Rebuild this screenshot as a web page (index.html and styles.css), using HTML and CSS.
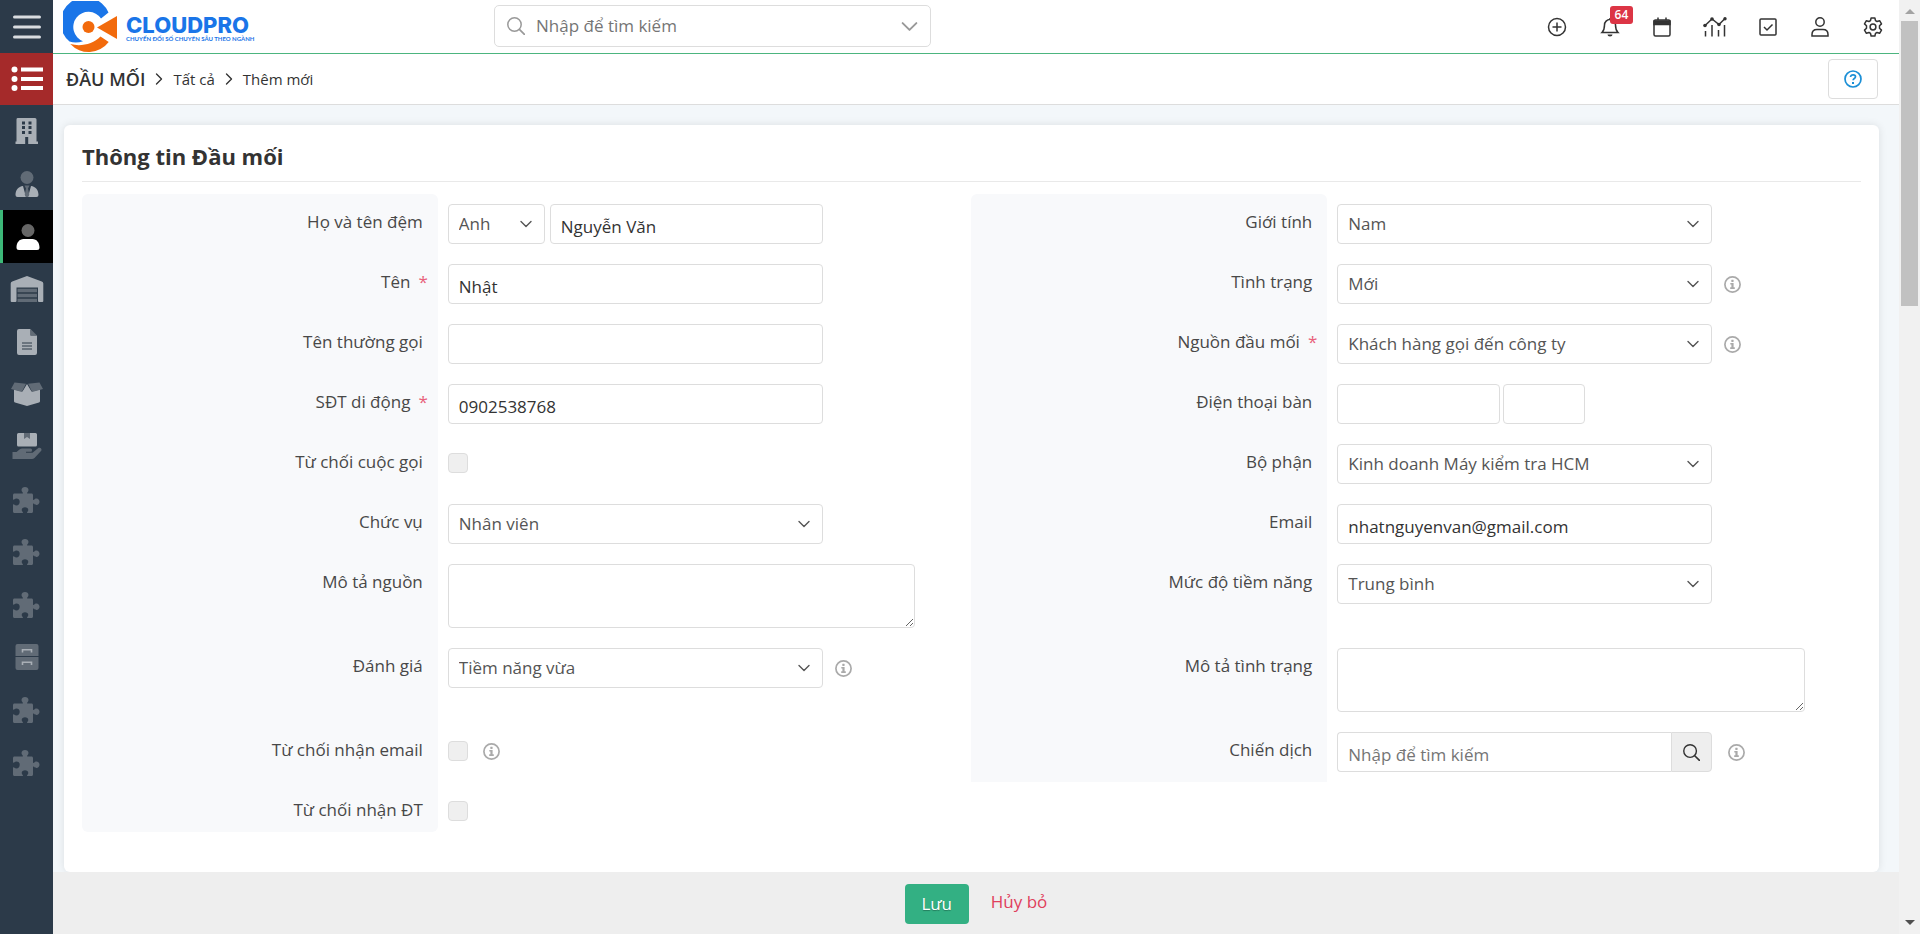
FILE: index.html
```html
<!DOCTYPE html>
<html lang="vi">
<head>
<meta charset="utf-8">
<title>Đầu mối - Thêm mới</title>
<link rel="stylesheet" href="styles.css">
</head>
<body>
<svg class="sprite" aria-hidden="true">
  <symbol id="chevron-down" viewBox="0 0 12 8"><path d="M1 1.500l5 5 5-5" fill="none" stroke="currentColor" stroke-width="1.400" stroke-linecap="round" stroke-linejoin="round"/></symbol>
  <symbol id="chevron-right" viewBox="0 0 8 12"><path d="M1.500 1l5 5-5 5" fill="none" stroke="currentColor" stroke-width="1.400" stroke-linecap="round" stroke-linejoin="round"/></symbol>
  <symbol id="search" viewBox="0 0 18 18"><circle cx="7.500" cy="7.500" r="6.700" fill="none" stroke="currentColor" stroke-width="1.500"/><path d="M12.400 12.400l5 5" stroke="currentColor" stroke-width="1.700" stroke-linecap="round"/></symbol>
  <symbol id="info" viewBox="0 0 17 17"><circle cx="8.500" cy="8.500" r="7.600" fill="none" stroke="currentColor" stroke-width="1.700"/><rect x="7.300" y="3.700" width="2.300" height="2.300" rx=".4" fill="currentColor"/><path d="M6.300 7h3.300v4.300h1.200v1.600H6.200v-1.600h1.200V8.500H6.300z" fill="currentColor"/></symbol>
  <symbol id="puzzle" viewBox="0 0 27 26"><path fill="currentColor" d="M1.500 6.500h7.800c.6 0 .8-.6.4-1.100C8.900 4.700 8.500 4 8.500 3 8.500 1.300 10 0 12 0s3.500 1.300 3.500 3c0 1-.4 1.700-1.200 2.400-.4.500-.2 1.100.4 1.100h3.800c.9 0 1.500.6 1.500 1.500v4.300c0 .6.6.8 1.100.4.6-.8 1.300-1.200 2.400-1.200 1.700 0 3 1.400 3 3.200s-1.300 3.200-3 3.200c-1.100 0-1.800-.4-2.400-1.200-.5-.4-1.100-.2-1.100.4v7.400c0 .9-.6 1.500-1.500 1.500h-3.800c-.7 0-.9-.6-.4-1.100.6-.6 1-1.200 1-2 0-1.500-1.500-2.600-3.300-2.600s-3.300 1.100-3.300 2.600c0 .8.400 1.400 1 2 .5.500.3 1.100-.4 1.100H1.500C.6 26 0 25.400 0 24.500v-6.600c0-.7.600-.8 1.100-.4.800.7 1.500 1 2.400 1 1.700 0 3.200-1.400 3.200-3.800s-1.500-3.300-3.200-3.300c-.9 0-1.600.4-2.400 1-.5.400-1.100.3-1.100-.4V8c0-.9.600-1.500 1.500-1.500z"/></symbol>
</svg>

<nav class="sidebar" aria-label="Menu chính">
  <button class="side-item side-toggle" aria-label="Mở menu"><svg width="28" height="24" viewBox="0 0 28 24"><path d="M1.500 2h25M1.500 12h25M1.500 22h25" stroke="#d9dce0" stroke-width="3" stroke-linecap="round"/></svg></button>
  <a class="side-item side-list" href="#" aria-label="Danh sách"><svg width="32" height="26" viewBox="0 0 32 26" fill="#fff"><circle cx="3.500" cy="3.500" r="3"/><circle cx="3.500" cy="13" r="3"/><circle cx="3.500" cy="22" r="3"/><rect x="10" y="1.500" width="22" height="4"/><rect x="10" y="11" width="22" height="4"/><rect x="10" y="20" width="22" height="4"/></svg></a>
  <div class="side-menu">
    <a class="side-item" href="#" aria-label="Công ty"><svg width="24" height="26" viewBox="0 0 24 26"><path fill="#a9afb6" d="M2.500 0h17.500a1.500 1.500 0 0 1 1.500 1.500V23.500H23v2.500H.5v-2.500h1V1.500A1.500 1.500 0 0 1 2.500 0z"/><path fill="#2c3a49" d="M7 3.500h3v3H7zm6.500 0h3v3h-3zM7 8h3v3H7zm6.500 0h3v3h-3zM7 13h3v3H7zm6.500 0h3v3h-3zM10.200 19h3v7h-3z"/></svg></a>
    <a class="side-item" href="#" aria-label="Liên hệ"><svg width="24" height="26" viewBox="0 0 24 26"><circle cx="12" cy="6.500" r="6.500" fill="#616b76"/><path fill="#a9afb6" d="M8 15l3 11H2.500A2 2 0 0 1 .5 24c0-5 3-8.500 7.500-9zM16 15l-3 11h8.500a2 2 0 0 0 2-2c0-5-3-8.500-7.500-9z"/><path fill="#616b76" d="M9.500 14.500h5L13 17.500l1.300 6-1.300 2.500h-2l-1.300-2.500 1.300-6z"/></svg></a>
    <a class="side-item side-active" href="#" aria-label="Đầu mối"><svg width="24" height="26" viewBox="0 0 24 26"><circle cx="12" cy="6.500" r="6.500" fill="#666"/><path fill="#fff" d="M7.500 15h9c4 0 7 3.500 7 8.500a2.500 2.500 0 0 1-2.500 2.500H3A2.500 2.500 0 0 1 .5 23.500c0-5 3-8.500 7-8.500z"/></svg></a>
    <a class="side-item" href="#" aria-label="Kho"><svg width="34" height="26" viewBox="0 0 34 26"><path fill="#a9afb6" d="M17 0l14.800 5.600A2 2 0 0 1 33.300 7.500V25a1 1 0 0 1-1 1H29a1 1 0 0 1-1-1V11.500H6.500V25a1 1 0 0 1-1 1H1.700a1 1 0 0 1-1-1V7.500a2 2 0 0 1 1.500-1.900z"/><path fill="#616b76" d="M7.500 12.700h19.500v3.500H7.500zm0 5h19.500v3.500H7.500zm0 5h19.500v3.300H7.500z"/></svg></a>
    <a class="side-item" href="#" aria-label="Báo giá"><svg width="20" height="26" viewBox="0 0 20 26"><path fill="#a9afb6" d="M2 0h11.500v6.500H20V24a2 2 0 0 1-2 2H2a2 2 0 0 1-2-2V2a2 2 0 0 1 2-2z"/><path fill="#616b76" d="M13.500 0L20 6.500h-6.500z"/><path stroke="#2c3a49" stroke-width="1" d="M5 14h10M5 17h10M5 20h10"/></svg></a>
    <a class="side-item" href="#" aria-label="Sản phẩm"><svg width="34" height="24" viewBox="0 0 34 24"><path fill="#a9afb6" d="M17 2l4.500 7.500L30 7.500V19a1.500 1.500 0 0 1-1 1.500L17 24 5 20.500A1.500 1.500 0 0 1 4 19V7.500l8.500 2z"/><path fill="#616b76" d="M4.500.5L16 1.800 11.800 10 1 7zM29.500.5L18 1.800 22.200 10 33 7z"/></svg></a>
    <a class="side-item" href="#" aria-label="Dịch vụ"><svg width="30" height="27" viewBox="0 0 30 27"><path fill="#a9afb6" d="M6.500 0h17a1.500 1.500 0 0 1 1.500 1.500V12a1.500 1.500 0 0 1-1.500 1.500h-17A1.500 1.500 0 0 1 5 12V1.500A1.500 1.500 0 0 1 6.500 0z"/><path fill="#616b76" d="M12 0h6v6l-3-2-3 2zM.5 19h4l3-2.500c1-.7 2-1 3.500-1h7.500c2 0 2 3.300 0 3.300H14v1h6.500l5.500-4.500c2.500-1.500 4.500 1 3 2.800l-6.500 7c-.8.700-1.500 1-2.500 1H.5z"/></svg></a>
    <a class="side-item" href="#" aria-label="Mô-đun 1"><svg class="puzzle"><use href="#puzzle"/></svg></a>
    <a class="side-item" href="#" aria-label="Mô-đun 2"><svg class="puzzle"><use href="#puzzle"/></svg></a>
    <a class="side-item" href="#" aria-label="Mô-đun 3"><svg class="puzzle"><use href="#puzzle"/></svg></a>
    <a class="side-item" href="#" aria-label="Lưu trữ"><svg width="24" height="26" viewBox="0 0 24 26"><path fill="#616b76" d="M2.500 0h19a2 2 0 0 1 2 2v10H.5V2a2 2 0 0 1 2-2zM.5 13h23v11a2 2 0 0 1-2 2h-19a2 2 0 0 1-2-2z"/><path fill="none" stroke="#a9afb6" stroke-width="1.600" d="M7.500 8.500V5.700h9v2.800M7.500 21v-2.800h9V21"/></svg></a>
    <a class="side-item" href="#" aria-label="Mô-đun 4"><svg class="puzzle"><use href="#puzzle"/></svg></a>
    <a class="side-item" href="#" aria-label="Mô-đun 5"><svg class="puzzle"><use href="#puzzle"/></svg></a>
  </div>
</nav>

<div class="page">
  <header class="topbar">
    <a class="logo" href="#">
      <svg width="56" height="52" viewBox="0 0 56 52" aria-hidden="true"><path fill="#1a75e8" d="M45.500 11.500A25 25 0 1 0 6.500 40.500Q13 42.500 20 40.200A15.200 15.200 0 1 1 38 17.400z"/><path fill="#f26a0c" d="M7.300 43A25 25 0 0 0 45.700 41L37.500 35.500C30 43 18 46 7.300 43z"/><circle cx="25.500" cy="26" r="6" fill="#f26a0c"/><path fill="#f26a0c" d="M34 26.500L54 15v23z"/></svg>
      <span class="logo-text"><strong>CLOUDPRO</strong><small>CHUYỂN ĐỔI SỐ CHUYÊN SÂU THEO NGÀNH</small></span>
    </a>
    <label class="global-search">
      <svg width="18" height="18"><use href="#search"/></svg>
      <input type="text" placeholder="Nhập để tìm kiếm" aria-label="Tìm kiếm">
      <svg width="17" height="11"><use href="#chevron-down"/></svg>
    </label>
    <div class="tools">
      <button class="tool" aria-label="Thêm"><svg width="20" height="20" viewBox="0 0 20 20"><circle cx="10" cy="10" r="8.500"/><path d="M10 5.500v9M5.500 10h9"/></svg></button>
      <button class="tool" aria-label="Thông báo"><svg width="20" height="20" viewBox="0 0 20 20"><path d="M10 1v1.500M2 15.500c2-2 2.500-4 2.500-7.500a5.500 5.500 0 0 1 11 0c0 3.500.5 5.500 2.500 7.500z"/><path fill="#333" stroke="none" d="M7.500 17.500h5a2.500 2 0 0 1-5 0z"/></svg><span class="badge">64</span></button>
      <button class="tool" aria-label="Lịch"><svg width="20" height="20" viewBox="0 0 20 20"><rect x="2" y="3" width="16" height="16" rx="1.500"/><path fill="#333" d="M2 4h16v3.500H2zM6 .5V3M14 .5V3"/></svg></button>
      <button class="tool" aria-label="Báo cáo"><svg width="24" height="20" viewBox="0 0 24 20"><path d="M1.500 9L9 2l7 5.500L22.500 1M2.500 14v5.500M9 8v11.500M15.500 13v6.500M21.500 8v11.500"/><g fill="#333" stroke="none"><circle cx="2" cy="8.500" r="1.800"/><circle cx="9" cy="2" r="1.800"/><circle cx="16" cy="7.500" r="1.800"/><circle cx="22" cy="1.800" r="1.700"/></g></svg></button>
      <button class="tool" aria-label="Công việc"><svg width="20" height="20" viewBox="0 0 20 20"><rect x="2" y="2" width="16" height="16" rx="1"/><path d="M6 10l3 3 5.500-5.500"/></svg></button>
      <button class="tool" aria-label="Tài khoản"><svg width="20" height="20" viewBox="0 0 20 20"><circle cx="10" cy="5" r="4.200"/><path d="M2 19v-1.500c0-3 2-5 5-5h6c3 0 5 2 5 5V19z"/></svg></button>
      <button class="tool" aria-label="Cài đặt"><svg width="20" height="20" viewBox="0 0 20 20"><circle cx="10" cy="10" r="2.900"/><path stroke-linejoin="round" d="M8.100 1h3.800l.6 2.600 1.500.9 2.600-.8 1.900 3.200-2 1.900v2.400l2 1.900-1.900 3.200-2.600-.8-1.500.9-.6 2.600H8.100l-.6-2.600-1.500-.9-2.600.8-1.900-3.200 2-1.900V8.800l-2-1.900 1.900-3.200 2.600.8 1.500-.9z"/></svg></button>
    </div>
  </header>

  <div class="crumbbar">
    <nav class="crumbs" aria-label="Đường dẫn">
      <a class="crumb-main" href="#">ĐẦU MỐI</a>
      <svg width="8" height="12"><use href="#chevron-right"/></svg>
      <a href="#">Tất cả</a>
      <svg width="8" height="12"><use href="#chevron-right"/></svg>
      <span>Thêm mới</span>
    </nav>
    <button class="help" aria-label="Trợ giúp"><svg width="18" height="18" viewBox="0 0 18 18" fill="none" stroke="#1b8fd6" stroke-width="1.700"><circle cx="9" cy="9" r="8"/><path d="M6.500 7c.2-1.500 1.200-2.200 2.600-2.200 1.300 0 2.400.8 2.400 2 0 1.700-2.400 1.700-2.400 3.400"/><path stroke-width="2" d="M9 12v2"/></svg></button>
  </div>

  <main class="content">
    <section class="card">
      <h1 class="card-title">Thông tin Đầu mối</h1>
      <form class="fields" id="lead-form">
        <div class="label first"><label for="middle">Họ và tên đệm</label></div>
        <div class="field"><div class="control name-group"><span class="select salutation"><select aria-label="Danh xưng"><option>Anh</option></select><svg><use href="#chevron-down"/></svg></span><input class="text" id="middle" type="text" value="Nguyễn Văn"></div></div>
        <div class="label first"><label for="gender">Giới tính</label></div>
        <div class="field"><span class="control select"><select id="gender"><option>Nam</option></select><svg><use href="#chevron-down"/></svg></span></div>

        <div class="label required"><label for="name">Tên</label><span class="star">*</span></div>
        <div class="field"><input class="control text" id="name" type="text" value="Nhật"></div>
        <div class="label"><label for="status">Tình trạng</label></div>
        <div class="field"><span class="control select"><select id="status"><option>Mới</option></select><svg><use href="#chevron-down"/></svg></span><svg class="info"><use href="#info"/></svg></div>

        <div class="label"><label for="nick">Tên thường gọi</label></div>
        <div class="field"><input class="control text" id="nick" type="text"></div>
        <div class="label required"><label for="source">Nguồn đầu mối</label><span class="star">*</span></div>
        <div class="field"><span class="control select"><select id="source"><option>Khách hàng gọi đến công ty</option></select><svg><use href="#chevron-down"/></svg></span><svg class="info"><use href="#info"/></svg></div>

        <div class="label required"><label for="mobile">SĐT di động</label><span class="star">*</span></div>
        <div class="field"><input class="control text" id="mobile" type="text" value="0902538768"></div>
        <div class="label"><label for="phone">Điện thoại bàn</label></div>
        <div class="field phone"><input class="text phone-number" id="phone" type="text"><input class="text phone-ext" type="text" aria-label="Số nội bộ"></div>

        <div class="label"><label for="nocall">Từ chối cuộc gọi</label></div>
        <div class="field field-check"><input class="check" id="nocall" type="checkbox"></div>
        <div class="label"><label for="dept">Bộ phận</label></div>
        <div class="field"><span class="control select"><select id="dept"><option>Kinh doanh Máy kiểm tra HCM</option></select><svg><use href="#chevron-down"/></svg></span></div>

        <div class="label"><label for="role">Chức vụ</label></div>
        <div class="field"><span class="control select"><select id="role"><option>Nhân viên</option></select><svg><use href="#chevron-down"/></svg></span></div>
        <div class="label"><label for="email">Email</label></div>
        <div class="field"><input class="control text" id="email" type="text" value="nhatnguyenvan@gmail.com"></div>

        <div class="label"><label for="source-desc">Mô tả nguồn</label></div>
        <div class="field"><textarea class="text area" id="source-desc"></textarea></div>
        <div class="label"><label for="potential">Mức độ tiềm năng</label></div>
        <div class="field"><span class="control select"><select id="potential"><option>Trung bình</option></select><svg><use href="#chevron-down"/></svg></span></div>

        <div class="label"><label for="rating">Đánh giá</label></div>
        <div class="field"><span class="control select"><select id="rating"><option>Tiềm năng vừa</option></select><svg><use href="#chevron-down"/></svg></span><svg class="info"><use href="#info"/></svg></div>
        <div class="label"><label for="status-desc">Mô tả tình trạng</label></div>
        <div class="field"><textarea class="text area" id="status-desc"></textarea></div>

        <div class="label"><label for="noemail">Từ chối nhận email</label></div>
        <div class="field field-check"><input class="check" id="noemail" type="checkbox"><svg class="info"><use href="#info"/></svg></div>
        <div class="label"><label for="campaign">Chiến dịch</label></div>
        <div class="field lookup-field"><div class="control lookup"><input class="text" id="campaign" type="text" placeholder="Nhập để tìm kiếm"><button type="button" aria-label="Tìm chiến dịch"><svg width="17" height="17"><use href="#search"/></svg></button></div><svg class="info"><use href="#info"/></svg></div>

        <div class="label last"><label for="nophone">Từ chối nhận ĐT</label></div>
        <div class="field field-check"><input class="check" id="nophone" type="checkbox"></div>
      </form>
    </section>
  </main>

  <footer class="actions">
    <button class="save" form="lead-form" type="button">Lưu</button>
    <a class="cancel" href="#">Hủy bỏ</a>
  </footer>
</div>

<div class="scrollbar" aria-hidden="true">
  <svg width="10" height="5" viewBox="0 0 10 5"><path d="M5 0l5 5H0z" fill="#a3a3a3"/></svg>
  <div class="track"><div class="thumb"></div></div>
  <svg width="10" height="5" viewBox="0 0 10 5"><path d="M0 0h10L5 5z" fill="#505050"/></svg>
</div>
</body>
</html>
```
FILE: styles.css
```css
* { box-sizing: border-box; }

body {
  margin: 0;
  height: 100vh;
  display: flex;
  overflow: hidden;
  background: #f3f7fa;
  color: #333;
  font: 400 17px/24px "Open Sans", "Noto Sans", sans-serif;
}

a { color: inherit; text-decoration: none; }
button, input, select, textarea { font: inherit; color: inherit; margin: 0; }
button { border: 0; padding: 0; background: none; cursor: pointer; }
svg { display: block; flex: none; }
.sprite { position: absolute; width: 0; height: 0; }

/* Sidebar */
.sidebar { flex: none; width: 53px; background: #2c3a49; display: flex; flex-direction: column; }
.side-item { display: flex; align-items: center; justify-content: center; }
.side-toggle { height: 53px; }
.side-list { height: 52px; background: #a52a2a; }
.side-menu { height: 684px; display: grid; grid-auto-rows: 1fr; }
.side-active { background: #000; border-left: 3px solid #3cb878; }
.puzzle { width: 27px; height: 26px; color: #616b76; }

.page { flex: 1; min-width: 0; display: flex; flex-direction: column; }

/* Top bar */
.topbar {
  flex: none;
  height: 54px;
  display: flex;
  align-items: center;
  background: #fff;
  border-bottom: 1px solid #4cb57f;
}
.logo { display: flex; align-items: center; gap: 7px; padding-left: 10px; width: 441px; }
.logo-text { display: flex; flex-direction: column; color: #1a75e8; padding-top: 4px; }
.logo-text strong { font: 800 22px/20px Inter, sans-serif; }
.logo-text small { font: 700 6px/8px Lato, sans-serif; white-space: nowrap; }
.global-search {
  width: 437px;
  height: 42px;
  margin-bottom: 1px;
  padding: 0 12px;
  display: flex;
  align-items: center;
  gap: 11px;
  border: 1px solid #ddd;
  border-radius: 5px;
  color: #999;
}
.global-search input { flex: 1; min-width: 0; border: 0; outline: 0; padding: 0; background: none; }
input::placeholder { color: #757575; opacity: 1; }
.tools { margin-left: auto; width: 368px; display: flex; }
.tool { position: relative; flex: 1; height: 40px; display: flex; align-items: center; justify-content: center; }
.tool svg { fill: none; stroke: #333; stroke-width: 1.5; }
.badge {
  position: absolute;
  left: 26px;
  top: -1px;
  padding: 0 5px;
  border-radius: 3px;
  background: #dc3545;
  color: #fff;
  font-size: 12px;
  line-height: 18px;
  font-weight: 600;
}

/* Breadcrumb bar */
.crumbbar {
  flex: none;
  height: 51px;
  padding: 0 21px 0 13px;
  display: flex;
  align-items: center;
  justify-content: space-between;
  background: #fff;
  border-bottom: 1px solid #ddd;
}
.crumbs { display: flex; align-items: center; gap: 10px; font-size: 15px; }
.crumb-main { font-size: 18px; font-weight: 600; }
.help {
  width: 50px;
  height: 40px;
  display: flex;
  align-items: center;
  justify-content: center;
  border: 1px solid #ddd;
  border-radius: 4px;
}

/* Form card */
.content { flex: 1; min-height: 0; display: flex; padding: 20px 20px 0 11px; }
.card {
  flex: 1;
  padding: 0 18px 40px;
  background: #fff;
  border-radius: 6px;
  box-shadow: 0 0 8px rgba(0, 0, 0, .1);
}
.card-title {
  margin: 0 0 12px;
  padding: 19px 0 13px;
  border-bottom: 1px solid #e9e9e9;
  font-size: 22px;
  line-height: 24px;
  font-weight: 700;
}
.fields { display: grid; grid-template-columns: 20% 30% 20% 30%; }
.label {
  display: flex;
  justify-content: flex-end;
  padding: 16px 15px 0 0;
  background: #f8f9fb;
  color: #484848;
}
.label.first { border-radius: 6px 6px 0 0; }
.label.last { border-radius: 0 0 6px 6px; }
.label.required { padding-right: 10px; }
.star { margin-left: 8px; color: #e8607a; }
.field { display: flex; align-items: flex-start; gap: 12px; padding: 10px; }
.control { width: 73%; }

.text, .select select {
  width: 100%;
  height: 40px;
  padding: 0 10px;
  border: 1px solid #ddd;
  border-radius: 4px;
  background: #fff;
  outline: 0;
}
.text { padding-top: 4px; }
.text.control { width: 73%; }
.select { display: grid; align-items: center; color: #555; }
.select select { grid-area: 1 / 1; appearance: none; }
.select svg { grid-area: 1 / 1; justify-self: end; width: 12px; height: 8px; margin-right: 13px; pointer-events: none; }
.name-group { display: flex; gap: 5px; }
.salutation { flex: none; width: 97px; }
.name-group .text { flex: 1; min-width: 0; }
.field.phone { gap: 3px; }
.phone-number { width: 163px; }
.phone-ext { width: 82px; }
.area { display: block; width: 91%; height: 64px; resize: vertical; }
.field-check { gap: 15px; padding: 19px 10px 11px; align-items: center; align-self: start; }
.check {
  appearance: none;
  width: 20px;
  height: 20px;
  border: 1px solid #ddd;
  border-radius: 4px;
  background: #efefef;
}
.info { width: 17px; height: 17px; color: #aaa; }
.control + .info { margin-top: 12px; }
.lookup { display: flex; }
.lookup .text { flex: 1; min-width: 0; border-right: 0; border-radius: 4px 0 0 4px; }
.lookup button {
  width: 41px;
  display: flex;
  align-items: center;
  justify-content: center;
  border: 1px solid #ddd;
  border-radius: 0 4px 4px 0;
  background: #eee;
}
.lookup-field { gap: 16px; }

/* Footer */
.actions {
  flex: none;
  height: 62px;
  display: flex;
  align-items: flex-start;
  justify-content: center;
  gap: 22px;
  padding-top: 12px;
  background: #eee;
}
.save {
  width: 64px;
  height: 40px;
  border-radius: 4px;
  background: #33b083;
  color: #fff;
  text-shadow: 0 1px 1px rgba(0, 0, 0, .3);
}
.cancel { padding-top: 6px; color: #e0405c; }

/* Scrollbar */
.scrollbar {
  flex: none;
  width: 21px;
  display: flex;
  flex-direction: column;
  align-items: center;
  gap: 7px;
  padding: 9px 0;
  background: #f1f1f1;
}
.track { flex: 1; width: 17px; }
.thumb { height: 32%; background: #c1c1c1; }
```
